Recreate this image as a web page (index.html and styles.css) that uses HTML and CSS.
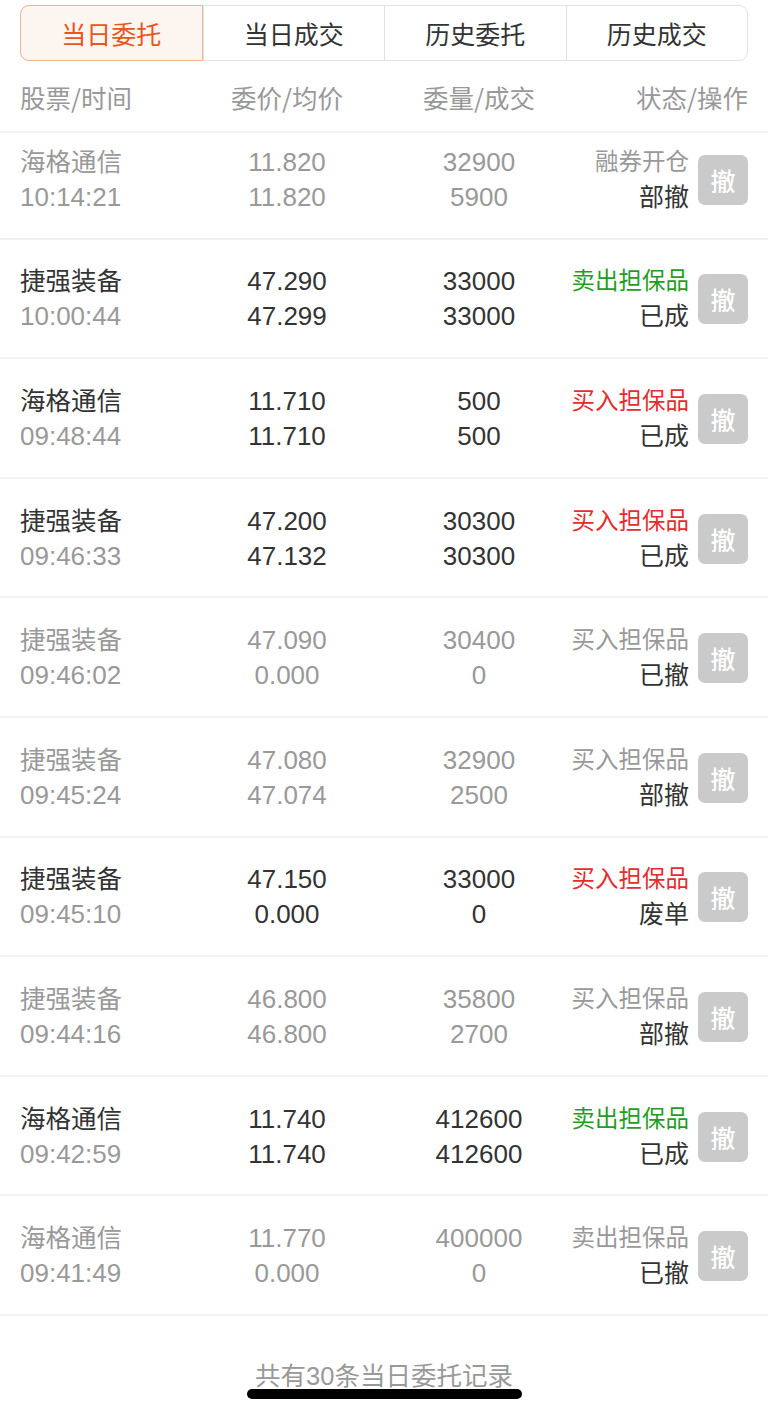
FILE: index.html
```html
<!DOCTYPE html>
<html lang="zh-CN">
<head>
    <meta charset="UTF-8">
    <meta name="viewport" content="width=device-width, initial-scale=1.0">
    <title>当日委托</title>
    <link rel="stylesheet" href="styles.css">
</head>
<body>
    <div class="page">
        <div class="tabs">
            <div class="tab active">当日委托</div>
            <div class="tab">当日成交</div>
            <div class="tab">历史委托</div>
            <div class="tab">历史成交</div>
        </div>

        <div class="head row-grid">
            <div class="c1">股票/时间</div>
            <div class="c2">委价/均价</div>
            <div class="c3">委量/成交</div>
            <div class="c4">状态/操作</div>
        </div>

        <div class="list">
            <div class="list-inner">
                <div class="order row-grid dim">
                    <div class="c1"><div>海格通信</div><div class="sub">10:14:21</div></div>
                    <div class="c2"><div>11.820</div><div>11.820</div></div>
                    <div class="c3"><div>32900</div><div>5900</div></div>
                    <div class="c4"><div class="state"><div class="kind">融券开仓</div><div class="status">部撤</div></div><button class="cancel">撤</button></div>
                </div>
                <div class="order row-grid">
                    <div class="c1"><div>捷强装备</div><div class="sub">10:00:44</div></div>
                    <div class="c2"><div>47.290</div><div>47.299</div></div>
                    <div class="c3"><div>33000</div><div>33000</div></div>
                    <div class="c4"><div class="state"><div class="kind sell">卖出担保品</div><div class="status">已成</div></div><button class="cancel">撤</button></div>
                </div>
                <div class="order row-grid">
                    <div class="c1"><div>海格通信</div><div class="sub">09:48:44</div></div>
                    <div class="c2"><div>11.710</div><div>11.710</div></div>
                    <div class="c3"><div>500</div><div>500</div></div>
                    <div class="c4"><div class="state"><div class="kind buy">买入担保品</div><div class="status">已成</div></div><button class="cancel">撤</button></div>
                </div>
                <div class="order row-grid">
                    <div class="c1"><div>捷强装备</div><div class="sub">09:46:33</div></div>
                    <div class="c2"><div>47.200</div><div>47.132</div></div>
                    <div class="c3"><div>30300</div><div>30300</div></div>
                    <div class="c4"><div class="state"><div class="kind buy">买入担保品</div><div class="status">已成</div></div><button class="cancel">撤</button></div>
                </div>
                <div class="order row-grid dim">
                    <div class="c1"><div>捷强装备</div><div class="sub">09:46:02</div></div>
                    <div class="c2"><div>47.090</div><div>0.000</div></div>
                    <div class="c3"><div>30400</div><div>0</div></div>
                    <div class="c4"><div class="state"><div class="kind">买入担保品</div><div class="status">已撤</div></div><button class="cancel">撤</button></div>
                </div>
                <div class="order row-grid dim">
                    <div class="c1"><div>捷强装备</div><div class="sub">09:45:24</div></div>
                    <div class="c2"><div>47.080</div><div>47.074</div></div>
                    <div class="c3"><div>32900</div><div>2500</div></div>
                    <div class="c4"><div class="state"><div class="kind">买入担保品</div><div class="status">部撤</div></div><button class="cancel">撤</button></div>
                </div>
                <div class="order row-grid">
                    <div class="c1"><div>捷强装备</div><div class="sub">09:45:10</div></div>
                    <div class="c2"><div>47.150</div><div>0.000</div></div>
                    <div class="c3"><div>33000</div><div>0</div></div>
                    <div class="c4"><div class="state"><div class="kind buy">买入担保品</div><div class="status">废单</div></div><button class="cancel">撤</button></div>
                </div>
                <div class="order row-grid dim">
                    <div class="c1"><div>捷强装备</div><div class="sub">09:44:16</div></div>
                    <div class="c2"><div>46.800</div><div>46.800</div></div>
                    <div class="c3"><div>35800</div><div>2700</div></div>
                    <div class="c4"><div class="state"><div class="kind">买入担保品</div><div class="status">部撤</div></div><button class="cancel">撤</button></div>
                </div>
                <div class="order row-grid">
                    <div class="c1"><div>海格通信</div><div class="sub">09:42:59</div></div>
                    <div class="c2"><div>11.740</div><div>11.740</div></div>
                    <div class="c3"><div>412600</div><div>412600</div></div>
                    <div class="c4"><div class="state"><div class="kind sell">卖出担保品</div><div class="status">已成</div></div><button class="cancel">撤</button></div>
                </div>
                <div class="order row-grid dim">
                    <div class="c1"><div>海格通信</div><div class="sub">09:41:49</div></div>
                    <div class="c2"><div>11.770</div><div>0.000</div></div>
                    <div class="c3"><div>400000</div><div>0</div></div>
                    <div class="c4"><div class="state"><div class="kind">卖出担保品</div><div class="status">已撤</div></div><button class="cancel">撤</button></div>
                </div>
            </div>
        </div>

        <div class="footer">共有30条当日委托记录</div>
        <div class="home-bar"></div>
    </div>
</body>
</html>
```

FILE: styles.css
```css
body {
    margin: 0;
    padding: 0;
    background-color: #fff;
    font-family: "Liberation Sans", "Noto Sans CJK SC", sans-serif;
    color: #333;
}

.page {
    position: relative;
    width: 768px;
    height: 1413px;
    overflow: hidden;
}

/* tab bar */
.tabs {
    display: flex;
    margin: 5px 20px 0;
    height: 56px;
    border: 1px solid #e2e2e2;
    border-radius: 9px;
    box-sizing: border-box;
}

.tab {
    flex: 1;
    display: flex;
    align-items: center;
    justify-content: center;
    font-size: 25px;
    color: #333;
    border-left: 1px solid #e2e2e2;
}

.tab:first-child {
    border-left: none;
}

.tab.active {
    margin: -1px 0 -1px -1px;
    color: #e8561f;
    background-color: #fdf5f0;
    border: 1px solid #f2b591;
    border-radius: 9px 0 0 9px;
}

/* columns */
.row-grid {
    display: grid;
    grid-template-columns: 180px 174px 210px 1fr;
    padding: 0 20px;
    align-items: center;
}

.c2,
.c3 {
    text-align: center;
}

.c4 {
    display: flex;
    justify-content: flex-end;
    align-items: center;
    gap: 9px;
    margin-left: -30px;
    white-space: nowrap;
}

.head {
    height: 72px;
    box-sizing: border-box;
    font-family: "Noto Sans CJK SC", sans-serif;
    font-size: 25.5px;
    color: #999;
    border-bottom: 2px solid #f2f2f2;
}

/* order list */
.list {
    height: 1183px;
    overflow: hidden;
}

.list-inner {
    margin-top: -13px;
}

.order {
    height: 119.6px;
    box-sizing: border-box;
    border-bottom: 2px solid #f2f2f2;
    font-size: 26px;
    line-height: 35px;
    padding-top: 2px;
}

.c1 div:first-child {
    font-size: 25.5px;
}

.sub {
    color: #999;
}

.state {
    text-align: right;
    font-size: 25px;
}

.kind {
    font-size: 23.5px;
}

.kind.buy {
    color: #e62c2c;
}

.kind.sell {
    color: #1f9e1f;
}

.dim .c1,
.dim .c2,
.dim .c3,
.dim .kind {
    color: #999;
}

.cancel {
    flex-shrink: 0;
    width: 50px;
    height: 50px;
    padding: 0;
    border: none;
    border-radius: 7px;
    background-color: #cacaca;
    color: #fff;
    font-family: "Noto Sans CJK SC", sans-serif;
    font-size: 25px;
    font-weight: 500;
}

.footer {
    padding-top: 39px;
    text-align: center;
    font-size: 25.5px;
    color: #999;
}

.home-bar {
    position: absolute;
    left: 247px;
    top: 1389px;
    width: 275px;
    height: 10px;
    border-radius: 5px;
    background-color: #000;
}
```
